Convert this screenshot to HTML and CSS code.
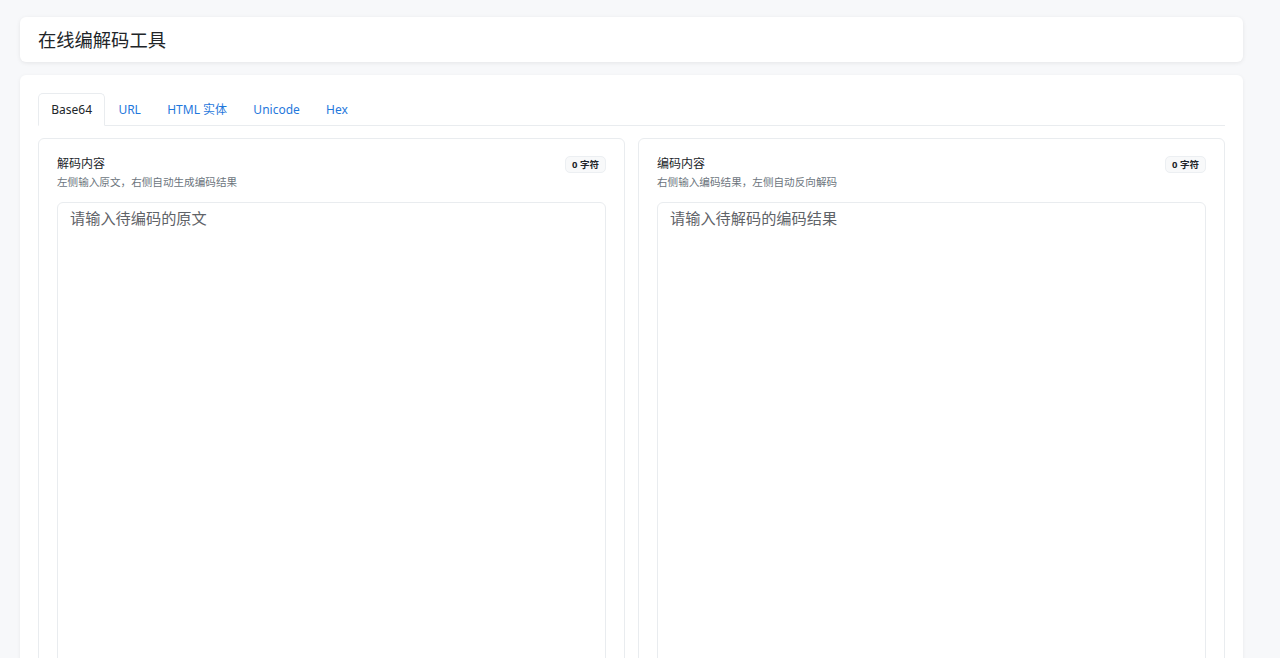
FILE: index.html
```html
<!DOCTYPE html>
<html lang="zh-CN">
<head>
<meta charset="utf-8">
<title>在线编解码工具</title>
<link rel="stylesheet" href="styles.css">
</head>
<body>
<div class="page">
  <header class="header-card">
    <h1 class="title">在线编解码工具</h1>
  </header>
  <main class="main-card">
    <nav class="tabs">
      <a class="tab active">Base64</a>
      <a class="tab">URL</a>
      <a class="tab">HTML 实体</a>
      <a class="tab">Unicode</a>
      <a class="tab">Hex</a>
    </nav>
    <div class="panels">
      <section class="panel">
        <div class="panel-head">
          <div>
            <div class="panel-title">解码内容</div>
            <div class="panel-sub">左侧输入原文，右侧自动生成编码结果</div>
          </div>
          <span class="badge">0 字符</span>
        </div>
        <textarea class="editor" placeholder="请输入待编码的原文"></textarea>
      </section>
      <section class="panel">
        <div class="panel-head">
          <div>
            <div class="panel-title">编码内容</div>
            <div class="panel-sub">右侧输入编码结果，左侧自动反向解码</div>
          </div>
          <span class="badge">0 字符</span>
        </div>
        <textarea class="editor" placeholder="请输入待解码的编码结果"></textarea>
      </section>
    </div>
  </main>
</div>
</body>
</html>
```
FILE: styles.css
```css
* { box-sizing: border-box; }
html, body { margin: 0; padding: 0; }
body {
  background: #f7f8fa;
  font-family: "Noto Sans", "Noto Sans CJK SC", sans-serif;
  color: #212529;
}
.page {
  width: 1223px;
  margin-left: 20px;
  padding-top: 17px;
  display: flex;
  flex-direction: column;
  gap: 13px;
}
.header-card {
  background: #fff;
  border-radius: 6px;
  box-shadow: 0 1px 4px rgba(0,0,0,0.08);
  height: 45px;
  display: flex;
  align-items: center;
  padding: 0 18px 2px;
}
.title {
  margin: 0;
  font-size: 18.3px;
  font-weight: 400;
  color: #212529;
}
.main-card {
  background: #fff;
  border-radius: 6px;
  box-shadow: 0 1px 4px rgba(0,0,0,0.06);
  padding: 18px 18px 0;
  height: 600px;
}
.tabs {
  display: flex;
  border-bottom: 1px solid #e9ecef;
  height: 33px;
}
.tab {
  font-size: 12px;
  color: #1f78dc;
  padding: 1px 12px 0 12.3px;
  line-height: 30px;
  border: 1px solid transparent;
  border-radius: 5px 5px 0 0;
  margin-bottom: -1px;
  cursor: pointer;
}
.tab.active {
  color: #212529;
  background: #fff;
  border-color: #e9ecef #e9ecef #fff;
}
.panels {
  margin-top: 12px;
  display: grid;
  grid-template-columns: 1fr 1fr;
  gap: 13px;
}
.panel {
  border: 1px solid #e9ecef;
  border-radius: 6px;
  padding: 16px 18px 18px;
  display: flex;
  flex-direction: column;
}
.panel-head {
  display: flex;
  justify-content: space-between;
  align-items: flex-start;
}
.panel-title {
  font-size: 12px;
  line-height: 18px;
  color: #212529;
}
.panel-sub {
  font-size: 10.6px;
  line-height: 16px;
  margin-top: 1px;
  color: #6c757d;
}
.badge {
  font-size: 9.5px;
  font-weight: 700;
  line-height: 14px;
  margin-top: 1px;
  padding: 1px 6px 0;
  border: 1px solid #eceff2;
  background: #f8f9fa;
  border-radius: 5px;
  color: #212529;
}
.editor {
  margin-top: 12px;
  width: 100%;
  height: 520px;
  border: 1px solid #e9ecef;
  border-radius: 6px;
  padding: 5px 12px;
  font-family: "Noto Sans", "Noto Sans CJK SC", sans-serif;
  font-size: 15.2px;
  line-height: 20px;
  resize: none;
  color: #212529;
  outline: none;
}
.editor::placeholder { color: #5f6368; }
```
